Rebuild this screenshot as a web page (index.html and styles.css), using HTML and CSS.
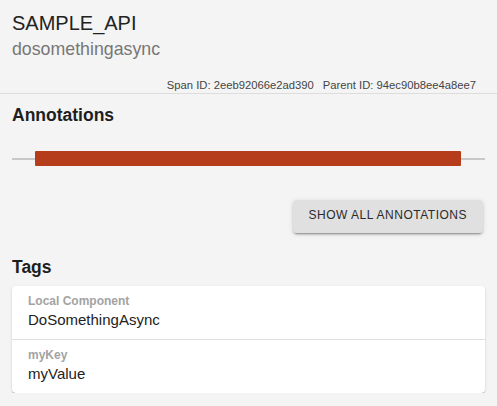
FILE: index.html
```html
<!DOCTYPE html>
<html>
<head>
<meta charset="utf-8">
<link rel="stylesheet" href="styles.css">
</head>
<body>
  <header class="header">
    <h1 class="title">SAMPLE_API</h1>
    <div class="subtitle">dosomethingasync</div>
    <div class="ids">
      <span>Span ID: 2eeb92066e2ad390</span>
      <span>Parent ID: 94ec90b8ee4a8ee7</span>
    </div>
  </header>
  <main class="content">
    <h2 class="section-title">Annotations</h2>
    <div class="track">
      <div class="span-bar" style="margin-left:23px;width:426px"></div>
    </div>
    <div class="actions">
      <button class="btn">SHOW ALL ANNOTATIONS</button>
    </div>
    <h2 class="section-title tags-title">Tags</h2>
    <div class="card">
      <div class="row">
        <div class="label">Local Component</div>
        <div class="value">DoSomethingAsync</div>
      </div>
      <div class="row">
        <div class="label">myKey</div>
        <div class="value">myValue</div>
      </div>
    </div>
  </main>
</body>
</html>
```
FILE: styles.css
```css
html, body {
  margin: 0;
  padding: 0;
  background: #f4f4f4;
}
body {
  font-family: "Liberation Sans", Arial, sans-serif;
  color: #222;
}
.header {
  padding: 11px 21px 0 12px;
  border-bottom: 1px solid #dddddd;
}
.title {
  margin: 0;
  font-size: 20px;
  line-height: 24px;
  font-weight: normal;
  color: #222;
}
.subtitle {
  margin-top: 3px;
  font-size: 17.75px;
  line-height: 22px;
  color: #777;
}
.ids {
  margin-top: 18px;
  display: flex;
  justify-content: flex-end;
  gap: 9px;
  font-size: 11.25px;
  line-height: 14px;
  color: #444;
  padding-bottom: 1px;
}
.content {
  padding: 0 12px;
}
.section-title {
  margin: 11px 0 0;
  font-size: 17.5px;
  line-height: 20px;
  font-weight: bold;
  color: #1e1e1e;
}
.track {
  position: relative;
  margin-top: 26px;
  height: 15px;
  display: flex;
}
.track::before {
  content: "";
  position: absolute;
  left: 0;
  right: 0;
  top: 7px;
  height: 2px;
  background: #c8c8c8;
}
.span-bar {
  position: relative;
  height: 15px;
  background: #b53d1b;
  border-radius: 1px;
}
.actions {
  display: flex;
  justify-content: flex-end;
  margin-top: 34px;
  padding-right: 2px;
}
.btn {
  font-family: "Liberation Sans", Arial, sans-serif;
  font-size: 12px;
  letter-spacing: 0.5px;
  line-height: 16px;
  color: #2a2a2a;
  background: #e0e0e0;
  border: none;
  border-radius: 4px;
  padding: 7px 16px 10px;
  box-shadow: 0 3px 1px -2px rgba(0,0,0,0.2), 0 2px 2px 0 rgba(0,0,0,0.14), 0 1px 5px 0 rgba(0,0,0,0.12);
}
.tags-title {
  margin-top: 24px;
}
.card {
  margin-top: 9px;
  background: #fff;
  border-radius: 4px;
  box-shadow: 0 2px 1px -1px rgba(0,0,0,0.2), 0 1px 1px 0 rgba(0,0,0,0.14), 0 1px 3px 0 rgba(0,0,0,0.12);
}
.row {
  padding: 8px 16px 10px;
  display: flex;
  flex-direction: column;
  gap: 3px;
}
.row + .row {
  border-top: 1px solid #e0e0e0;
}
.label {
  font-size: 12px;
  line-height: 14px;
  font-weight: bold;
  color: #a3a3a3;
}
.value {
  font-size: 15px;
  line-height: 18px;
  color: #222;
}
```
